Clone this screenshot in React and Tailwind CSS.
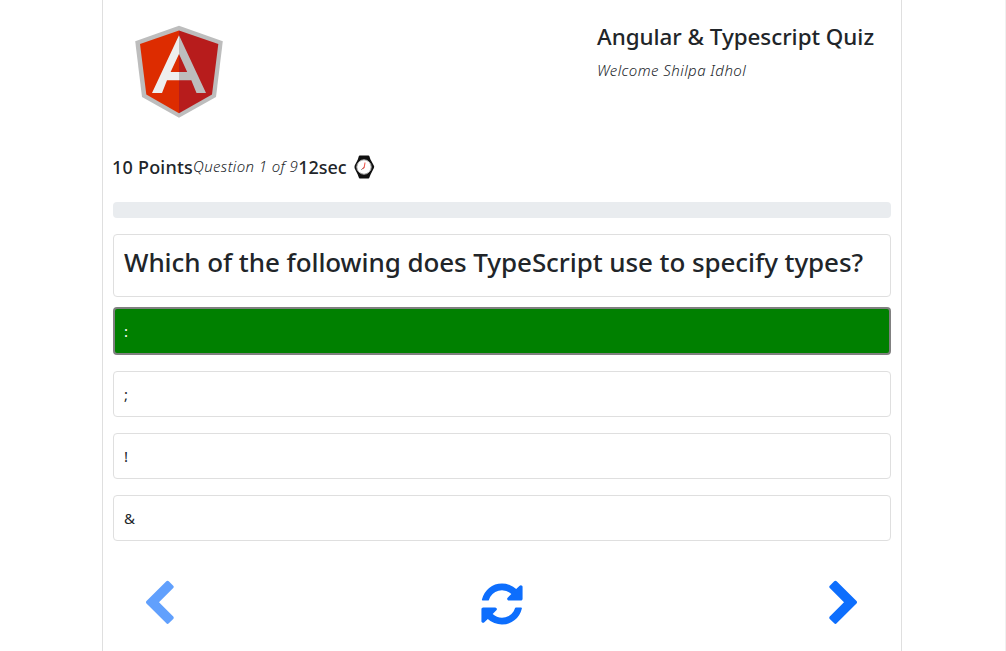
const options = [';', '!', '&'];

function AngularLogo() {
  return (
    <svg className="block h-[94px] w-[90px] shrink-0" viewBox="134 25 90 94">
      <path fill="#bdbdbd" d="M179 25.8 222.8 41.3 216 97 179 117.8 142 97 135.2 41.3Z" />
      <path fill="#dd2c00" d="M179 30.5 140 44 146.3 94.5 179 113.2Z" />
      <path fill="#b71c1c" d="M179 30.5 218.3 44 212 94.5 179 113.2Z" />
      <path fill="#eeeeee" d="M179 35.3 152 93H162L167 80.3H179V72H170.6L179 54Z" />
      <path fill="#bdbdbd" d="M179 35.3 206 93H196.5L191.3 80.3H179V72H187.2L179 54Z" />
    </svg>
  );
}

function WatchIcon() {
  return (
    <svg className="ml-[7px] block h-6 w-[21px] shrink-0" viewBox="0 0 21 24">
      <path fill="#111" d="M4.8 1.2Q5 .4 5.8 .4H14.4Q15.2 .4 15.4 1.2L16.4 4.2 19.8 10.4Q20.6 11.6 19.9 13L16.6 19.4 15.4 22.6Q15.2 23.5 14.4 23.5H5.8Q5 23.5 4.8 22.6L3.7 19.4.7 13.4Q.2 12 .7 10.6L3.8 4.4Z" />
      <circle cx="10" cy="12" r="7.2" fill="#fff" stroke="#aaa" strokeWidth="1" />
      <path fill="none" stroke="#777" strokeWidth="1" d="M10.2 12.2 7.3 14.7" />
      <path fill="none" stroke="#f05a50" strokeWidth="1.1" d="M11 7.5 10.2 12.4 8.6 13.8" />
    </svg>
  );
}

function Glyph({ d, className }) {
  return (
    <svg className={`block size-12 ${className}`} viewBox="0 0 1792 1792" fill="currentColor">
      <path d={d} />
    </svg>
  );
}

const LEFT = 'M1427 301l-531 531 531 531q19 19 19 45t-19 45l-166 166q-19 19-45 19t-45-19l-742-742q-19-19-19-45t19-45l742-742q19-19 45-19t45 19l166 166q19 19 19 45t-19 45z';
const RIGHT = 'M1363 877l-742 742q-19 19-45 19t-45-19l-166-166q-19-19-19-45t19-45l531-531-531-531q-19-19-19-45t19-45l166-166q19-19 45-19t45 19l742 742q19 19 19 45t-19 45z';
const REFRESH = 'M1639 1056q0 5-1 7-64 268-268 434.5t-478 166.5q-146 0-282.5-55t-243.5-157l-129 129q-19 19-45 19t-45-19-19-45v-448q0-26 19-45t45-19h448q26 0 45 19t19 45-19 45l-137 137q71 66 161 102t187 36q134 0 250-65t186-179q11-17 53-117 8-23 30-23h192q13 0 22.5 9.5t9.5 22.5zm25-800v448q0 26-19 45t-45 19h-448q-26 0-45-19t-19-45 19-45l138-138q-148-137-349-137-134 0-250 65t-186 179q-11 17-53 117-8 23-30 23h-199q-13 0-22.5-9.5t-9.5-22.5v-7q65-268 270-434.5t480-166.5q146 0 284 55.5t245 156.5l130-129q19-19 45-19t45 19 19 45z';

export default function App() {
  return (
    <div className="h-[651px] overflow-hidden border-r border-[#f0f0f0] bg-white pl-[102px] font-['Noto_Sans','Open_Sans',sans-serif] text-[#212529]">
      <main className="h-full w-[800px] border-x border-[#dfdfdf] px-[10px]">
        <header className="flex h-[155px] pt-[25px] pl-[21px]">
          <AngularLogo />
          <div className="ml-[373px] whitespace-nowrap">
            <h1 className="text-[22.4px] leading-6 font-medium tracking-[-0.03px]">Angular &amp; Typescript Quiz</h1>
            <p className="mt-[9px] text-[15px] leading-6 font-[350] tracking-[0.45px] italic">Welcome Shilpa Idhol</p>
          </div>
        </header>
        <div className="-ml-px flex h-6 items-center whitespace-nowrap">
          <span className="text-lg leading-6 font-medium tracking-[0.22px]">10 Points</span>
          <span className="-mt-0.5 text-[15px] leading-6 font-[350] tracking-[0.38px] italic">Question 1 of 9</span>
          <span className="text-lg leading-6 font-medium">12sec</span>
          <WatchIcon />
        </div>
        <div className="mt-[23px] h-4 rounded bg-[#e9ecef]" />
        <section className="mt-4 h-[63px] rounded border border-[#dfdfdf] px-[10px] pt-[11px]">
          <h2 className="text-[26px] leading-8 font-medium tracking-[-0.08px] whitespace-nowrap">Which of the following does TypeScript use to specify types?</h2>
        </section>
        <ul className="mt-[10px]">
          <li className="flex h-12 items-center rounded border-2 border-[#808080] bg-[#008000] px-[9px] pt-px text-[15px] text-white">:</li>
          {options.map((option) => (
            <li key={option} className="mt-4 flex h-[46px] items-center rounded border border-[#dfdfdf] px-[10px] pt-px text-[15px]">{option}</li>
          ))}
        </ul>
        <nav className="mt-[39px] flex justify-between pr-[22.7px] pl-[22px] text-[#0d6efd]">
          <Glyph d={LEFT} className="opacity-65" />
          <Glyph d={REFRESH} className="" />
          <Glyph d={RIGHT} className="" />
        </nav>
      </main>
    </div>
  );
}
